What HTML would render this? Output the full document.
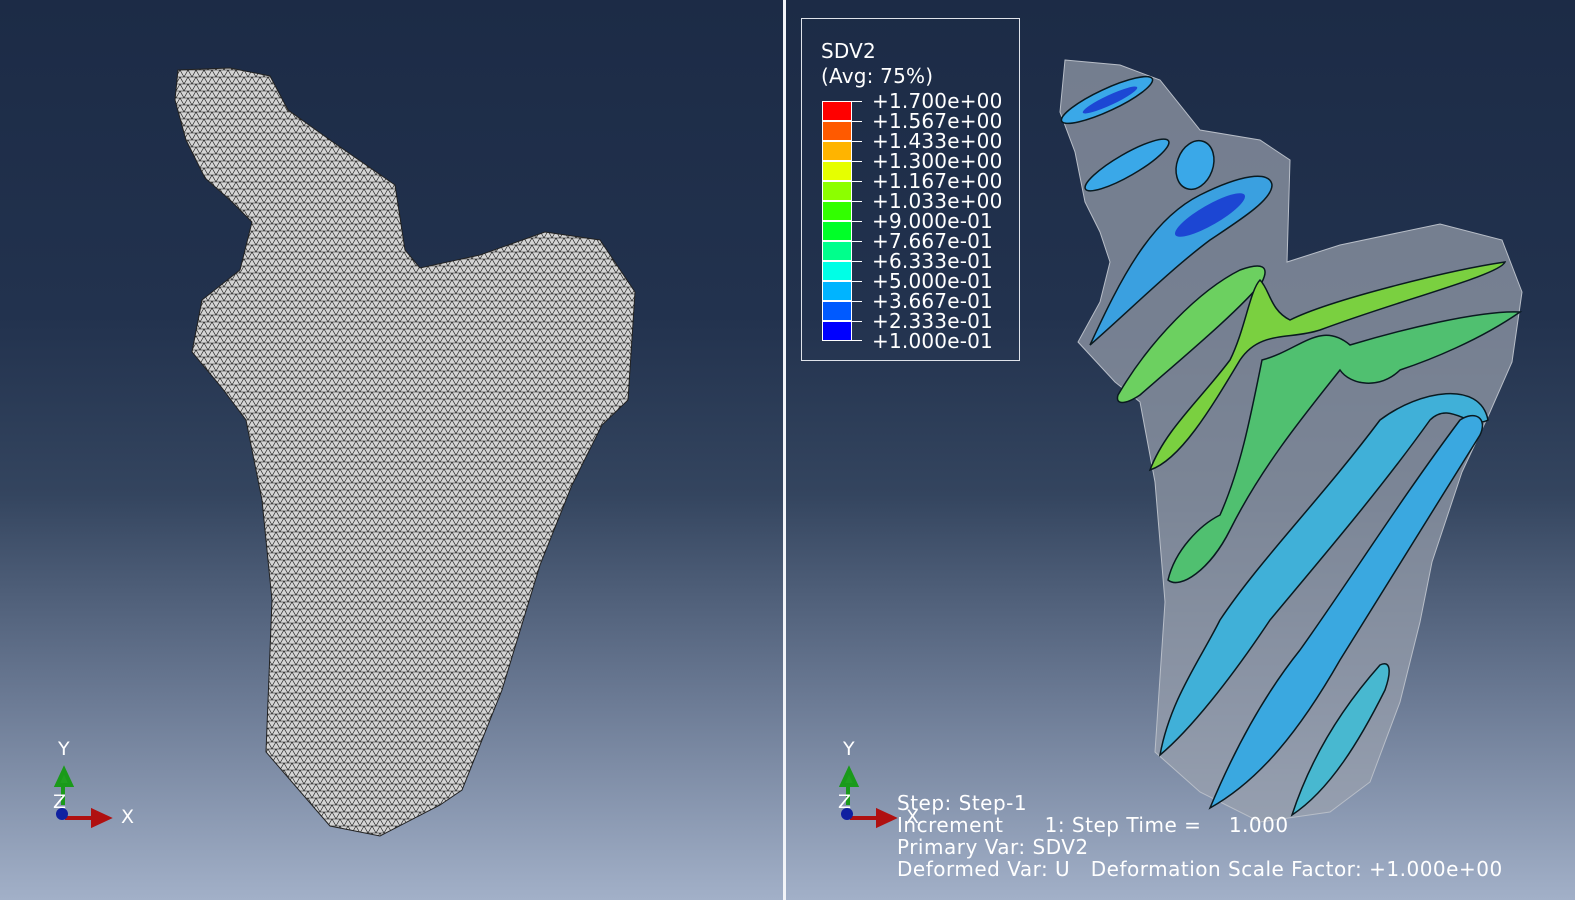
<!DOCTYPE html>
<html><head><meta charset="utf-8"><style>
html,body{margin:0;padding:0}
body{width:1575px;height:900px;overflow:hidden;position:relative;font-family:"DejaVu Sans","Liberation Sans",sans-serif;color:#fff;
background:linear-gradient(to bottom,#1c2b46 0%,#22324e 35%,#34455f 55%,#6c7b95 78%,#a2b0c8 100%);}
.div{position:absolute;left:783px;top:0;width:3px;height:900px;background:#f2f4f8}
.leg{position:absolute;left:801px;top:18px;width:219px;height:343px;border:1px solid #dfe3ea;box-sizing:border-box}
.t{position:absolute;font-size:20px;letter-spacing:0.2px;white-space:pre;line-height:20px}
.sw{position:absolute;left:20px;width:30px;height:20px;border:1px solid #fff;box-sizing:border-box}
.tick{position:absolute;left:50px;width:10px;height:1px;background:#fff}
.bt{position:absolute;left:897px;font-size:20px;letter-spacing:0.5px;white-space:pre;line-height:22px}
</style></head><body>
<svg width="1575" height="900" style="position:absolute;left:0;top:0">
<defs>
<pattern id="mesh" width="8" height="7" patternUnits="userSpaceOnUse">
<rect width="8" height="7" fill="#d4d4d4"/>
<path d="M0 0H8M0 7H8M0 7L4 0L8 7M-4 0L0 7M8 7L12 0" stroke="#111" stroke-width="0.6" fill="none"/>
</pattern>
</defs>
<path d="M178 70 L230 68 L270 76 L288 110 L330 140 L395 185 L405 250 L420 268 L480 255 L545 232 L600 240 L635 292 L628 400 L602 425 L572 485 L540 565 L502 690 L462 790 L440 805 L380 836 L330 826 L266 752 L272 600 L262 500 L246 420 L222 388 L192 352 L202 300 L240 270 L252 222 L230 200 L205 178 L186 140 L175 100 Z" fill="url(#mesh)" stroke="#222" stroke-width="1"/>
<path d="M1065 60 L1120 65 L1160 80 L1200 130 L1260 140 L1290 160 L1287 262 L1340 245 L1440 224 L1502 240 L1522 292 L1512 362 L1490 412 L1462 472 L1432 562 L1420 622 L1400 702 L1370 782 L1330 812 L1260 822 L1200 792 L1155 752 L1165 602 L1155 482 L1140 402 L1115 382 L1078 342 L1100 302 L1110 262 L1100 232 L1085 202 L1075 152 L1060 112 Z" fill="#9aa1ae" fill-opacity="0.7" stroke="#b8bec8" stroke-width="1"/>
<g stroke="#0a1a20" stroke-width="1.5" fill="#3aa8e8">
<ellipse cx="1107" cy="100" rx="50" ry="11" transform="rotate(-25 1107 100)"/>
<ellipse cx="1127" cy="165" rx="48" ry="11" transform="rotate(-30 1127 165)"/>
<ellipse cx="1195" cy="165" rx="18" ry="25" transform="rotate(20 1195 165)"/>
<path d="M1090 345 C1120 280 1150 220 1200 195 C1240 175 1270 170 1272 185 C1272 200 1240 220 1210 240 C1170 270 1130 310 1090 345Z" fill="#3aa0e0"/>
<path d="M1118 395 C1150 340 1200 290 1240 270 C1262 262 1270 266 1262 282 C1240 310 1180 360 1140 395 C1125 405 1115 405 1118 395Z" fill="#6cd060"/>
<path d="M1150 470 C1165 430 1200 400 1230 360 C1245 330 1250 290 1260 280 C1270 290 1270 310 1290 320 C1330 300 1450 270 1505 262 C1500 275 1400 300 1320 330 C1290 340 1260 330 1240 360 C1210 410 1180 460 1150 470Z" fill="#7ad040"/>
<path d="M1168 580 C1175 550 1200 525 1220 515 C1240 470 1250 420 1262 360 C1300 350 1320 320 1350 345 C1400 330 1480 310 1520 312 C1480 340 1430 360 1400 370 C1380 390 1350 385 1340 370 C1300 420 1260 470 1230 530 C1210 570 1180 590 1168 580Z" fill="#50c070"/>
<path d="M1160 755 C1170 700 1200 660 1220 620 C1260 560 1320 500 1380 420 C1420 390 1480 380 1488 420 C1470 430 1450 400 1430 420 C1380 490 1320 560 1270 620 C1230 680 1190 730 1160 755Z" fill="#40b0d8"/>
<path d="M1210 808 C1230 760 1260 700 1300 650 C1350 580 1400 500 1460 420 C1475 410 1488 418 1480 435 C1440 500 1390 580 1340 660 C1300 730 1260 780 1210 808Z" fill="#3aa8e0"/>
<path d="M1292 815 C1310 760 1340 710 1380 665 C1390 660 1392 670 1385 690 C1360 740 1330 790 1292 815Z" fill="#48b8d0"/>
</g>
<g fill="#1530d0" opacity="0.8">
<ellipse cx="1110" cy="100" rx="30" ry="5" transform="rotate(-25 1110 100)"/>
<ellipse cx="1210" cy="215" rx="40" ry="10" transform="rotate(-30 1210 215)"/>
</g>
<g>
<path d="M63 805 V785 M57 785 L64 770 L71 785Z" stroke="#1a9a1a" stroke-width="4" fill="#20a020"/>
<path d="M65 818 H95 M93 811 L108 818 L93 825Z" stroke="#b01010" stroke-width="4" fill="#b01010"/>
<circle cx="62" cy="814" r="6" fill="#1020a0"/>
<path d="M848 805 V785 M842 785 L849 770 L856 785Z" stroke="#1a9a1a" stroke-width="4" fill="#20a020"/>
<path d="M850 818 H880 M878 811 L893 818 L878 825Z" stroke="#b01010" stroke-width="4" fill="#b01010"/>
<circle cx="847" cy="814" r="6" fill="#1020a0"/>
</g>
<g fill="#fff" font-family="DejaVu Sans, sans-serif" font-size="19">
<text x="58" y="755">Y</text><text x="121" y="823">X</text><text x="53" y="808">Z</text>
<text x="843" y="755">Y</text><text x="906" y="823">X</text><text x="838" y="808">Z</text>
</g>
</svg>
<div class="div"></div>
<div class="leg">
<div class="t" style="left:19px;top:22px">SDV2</div>
<div class="t" style="left:19px;top:47px">(Avg: 75%)</div>
<div class="sw" style="top:82px;background:#ff0000"></div>
<div class="sw" style="top:102px;background:#ff5a00"></div>
<div class="sw" style="top:122px;background:#ffb400"></div>
<div class="sw" style="top:142px;background:#e6ff00"></div>
<div class="sw" style="top:162px;background:#8cff00"></div>
<div class="sw" style="top:182px;background:#32ff00"></div>
<div class="sw" style="top:202px;background:#00ff28"></div>
<div class="sw" style="top:222px;background:#00ff8c"></div>
<div class="sw" style="top:242px;background:#00ffe6"></div>
<div class="sw" style="top:262px;background:#00b4ff"></div>
<div class="sw" style="top:282px;background:#005aff"></div>
<div class="sw" style="top:302px;background:#0000ff"></div>
<div class="tick" style="top:82px"></div><div class="tick" style="top:102px"></div><div class="tick" style="top:122px"></div><div class="tick" style="top:142px"></div><div class="tick" style="top:162px"></div><div class="tick" style="top:182px"></div><div class="tick" style="top:202px"></div><div class="tick" style="top:222px"></div><div class="tick" style="top:242px"></div><div class="tick" style="top:262px"></div><div class="tick" style="top:282px"></div><div class="tick" style="top:302px"></div><div class="tick" style="top:321px"></div>
<div class="t" style="left:70px;top:72px">+1.700e+00
+1.567e+00
+1.433e+00
+1.300e+00
+1.167e+00
+1.033e+00
+9.000e-01
+7.667e-01
+6.333e-01
+5.000e-01
+3.667e-01
+2.333e-01
+1.000e-01</div>
</div>
<div class="bt" style="top:792px">Step: Step-1
Increment      1: Step Time =    1.000
Primary Var: SDV2
Deformed Var: U   Deformation Scale Factor: +1.000e+00</div>
</body></html>
